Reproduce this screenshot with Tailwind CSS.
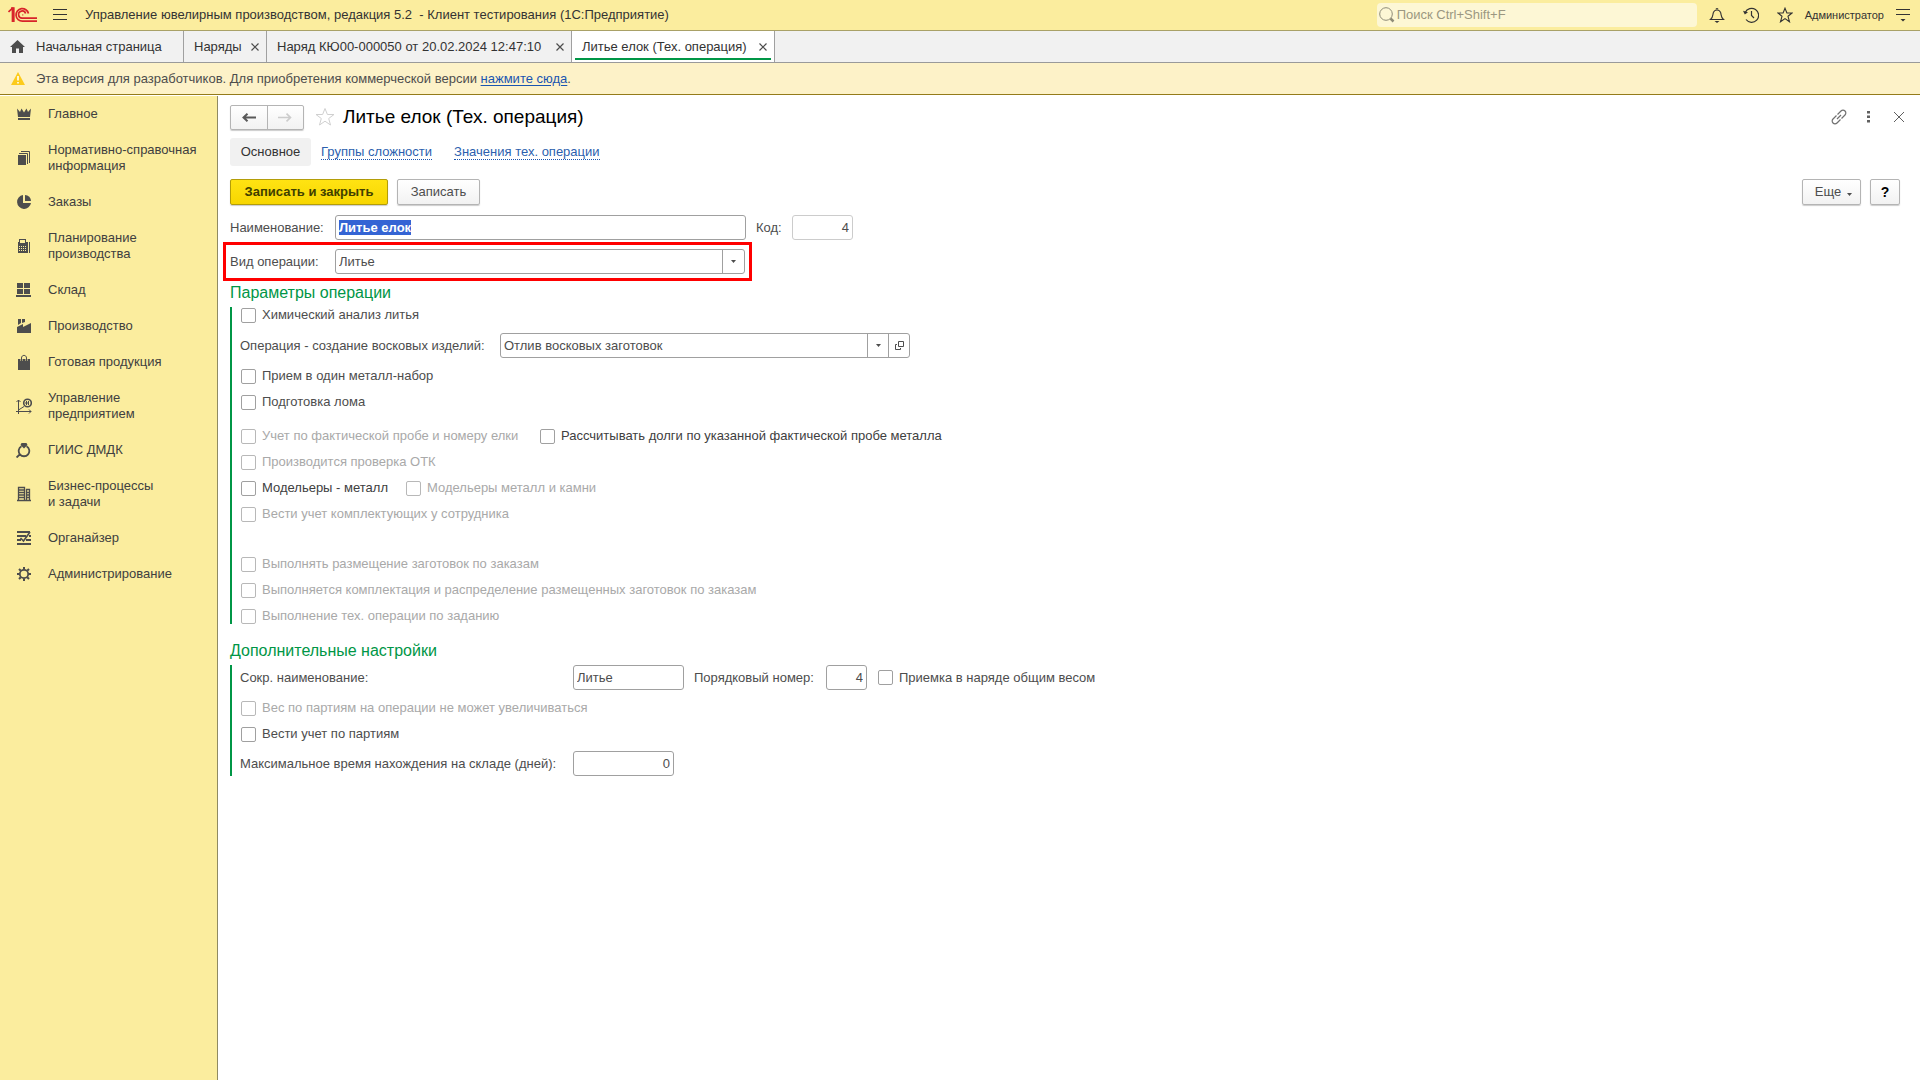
<!DOCTYPE html>
<html lang="ru">
<head>
<meta charset="utf-8">
<meta name="viewport" content="width=device-width, initial-scale=1">
<title>Литье елок (Тех. операция)</title>
<script src="https://cdn.jsdelivr.net/npm/@tailwindcss/browser@4"></script>
</head>
<body class="flex min-h-screen flex-col bg-white font-['Liberation_Sans',Arial,sans-serif] text-[13px] leading-4 text-[#4d4d4d]">

<!-- Title bar -->
<header class="flex h-[31px] shrink-0 items-center border-b border-[#a9a167] bg-[#fbed9e] pl-2 pr-[10px] text-[#333333]">
  <svg class="h-4 w-[30px] shrink-0" viewBox="0 0 30 16" fill="none" stroke="#d8232a" stroke-width="1.7" role="img" aria-label="1С">
    <path d="M0.5 5L4.5 1.2V15M3 1.2H5.8V15"/>
    <path d="M20.5 6.5A6.3 6.3 0 1 0 14.5 14.2H29"/>
    <path d="M17.6 6.5A3.6 3.6 0 1 0 14.5 11.2H29"/>
    <path d="M14.5 7.8H15.2"/>
  </svg>
  <button type="button" class="ml-[15px] shrink-0" aria-label="Меню">
    <svg class="h-3 w-[14px]" viewBox="0 0 14 12" stroke="#333333"><path d="M0 .5H14M0 5.5H14M0 10.5H14"/></svg>
  </button>
  <div class="ml-[18px] whitespace-pre">Управление ювелирным производством, редакция 5.2  - Клиент тестирования (1С:Предприятие)</div>
  <label class="ml-auto flex h-6 w-80 items-center gap-[2px] rounded-sm bg-[#fdf7d5] pl-[2px]">
    <svg class="size-4 shrink-0" viewBox="0 0 16 16" fill="none" stroke="#8f8c78"><circle cx="7" cy="7" r="6.3"/><path d="M11.5 11.5L14.5 14.5" stroke-width="2.5"/></svg>
    <input type="search" placeholder="Поиск Ctrl+Shift+F" class="min-w-0 flex-1 bg-transparent outline-none placeholder:text-[#9b9781]">
  </label>
  <button type="button" class="ml-3 shrink-0" aria-label="Уведомления">
    <svg class="size-4" viewBox="0 0 16 16" fill="none" stroke="#333333" stroke-width="1.1"><path d="M1.5 12.5C4.5 10 3.5 7.5 4.5 5.2C5 3.8 6.5 3 8 3S11 3.8 11.5 5.2C12.5 7.5 11.5 10 14.5 12.5Z"/><path d="M7 2.5a1 1 0 0 1 2 0"/><path d="M5.5 14H10.5L8 16Z" fill="#333333" stroke="none"/></svg>
  </button>
  <button type="button" class="ml-[18px] shrink-0" aria-label="История">
    <svg class="size-4" viewBox="0 0 16 16" fill="none" stroke="#333333" stroke-width="1.2"><path d="M2.2 5.5A7 7 0 1 1 3 12.5"/><path d="M0 3.8L5 5.2L1.8 7.5Z" fill="#333333" stroke="none"/><path d="M8.5 4V8.5L11 11"/></svg>
  </button>
  <button type="button" class="ml-[18px] shrink-0" aria-label="Избранное">
    <svg class="size-4" viewBox="0 0 16 16" fill="none" stroke="#333333" stroke-width="1.1"><path d="M8 1.2L9.9 6H15L11 9.3L12.5 14.8L8 11.6L3.5 14.8L5 9.3L1 6H6.1Z"/></svg>
  </button>
  <div class="ml-3 text-[11px]">Администратор</div>
  <button type="button" class="ml-3 shrink-0" aria-label="Сервис и настройки">
    <svg class="h-[14px] w-[14px]" viewBox="0 0 14 14" stroke="#333333"><path d="M0 1.5H14M0 6.5H14"/><path d="M4.5 11H9.5L7 13.5Z" fill="#333333" stroke="none"/></svg>
  </button>
</header>

<!-- Open windows -->
<nav class="flex h-8 shrink-0 whitespace-nowrap border-b border-[#9a9a9a] bg-[#f1f1f1] text-[#333333]">
  <a href="#" class="flex w-[184px] items-center gap-[11px] border-r border-[#a0a0a0] pl-[10px]">
    <svg class="h-[13px] w-[15px]" viewBox="0 0 15 13" fill="#4d4d4d"><path d="M7.5 0L15 7H13V13H9V8.5H6V13H2V7H0Z"/></svg>
    Начальная страница
  </a>
  <div class="flex w-[83px] items-center justify-between border-r border-[#a0a0a0] pl-[10px] pr-[7px]">
    <a href="#">Наряды</a>
    <button type="button" aria-label="Закрыть вкладку"><svg class="size-2" viewBox="0 0 8 8" stroke="#4d4d4d" stroke-width="1.2"><path d="M.5 .5L7.5 7.5M7.5 .5L.5 7.5"/></svg></button>
  </div>
  <div class="flex w-[305px] items-center justify-between border-r border-[#a0a0a0] pl-[10px] pr-[7px]">
    <a href="#">Наряд КЮ00-000050 от 20.02.2024 12:47:10</a>
    <button type="button" aria-label="Закрыть вкладку"><svg class="size-2" viewBox="0 0 8 8" stroke="#4d4d4d" stroke-width="1.2"><path d="M.5 .5L7.5 7.5M7.5 .5L.5 7.5"/></svg></button>
  </div>
  <div class="flex w-[203px] border-r border-[#a0a0a0] bg-white px-[3px] pb-[2px]">
    <div class="flex flex-1 items-center justify-between border-b-2 border-[#009646] pl-[7px] pr-1 pt-1">
      <a href="#" aria-current="page">Литье елок (Тех. операция)</a>
      <button type="button" aria-label="Закрыть вкладку"><svg class="size-2" viewBox="0 0 8 8" stroke="#4d4d4d" stroke-width="1.2"><path d="M.5 .5L7.5 7.5M7.5 .5L.5 7.5"/></svg></button>
    </div>
  </div>
</nav>

<!-- Licence notice -->
<div class="flex h-8 shrink-0 items-center gap-[11px] border-b border-[#947b1a] bg-[#fdf2c8] pl-[11px]">
  <svg class="h-[13px] w-[14px]" viewBox="0 0 14 13"><path d="M7 0L14 13H0Z" fill="#fccb1c"/><path d="M7 4V8.5M7 10V11.5" stroke="#fff" stroke-width="1.6"/></svg>
  <p>Эта версия для разработчиков. Для приобретения коммерческой версии <a href="#" class="text-[#1a55b0] underline underline-offset-2">нажмите сюда</a>.</p>
</div>

<div class="flex flex-1 pt-px">
  <!-- Sections -->
  <nav class="flex w-[218px] shrink-0 flex-col border-r border-[#8f8a62] bg-[#fbed9e] text-[#404040]">
    <a href="#" class="flex items-center gap-4 py-[10px] pl-4">
      <svg class="size-4 shrink-0" viewBox="0 0 16 16" fill="#4d4d4d"><path d="M1 2.500L4 6L5.500 2.500L8 6.500L10.500 2.500L12 6L15 2.500L14 11H2Z"/><path d="M2 12H14V14H2Z"/></svg>Главное</a>
    <a href="#" class="flex items-center gap-4 py-[10px] pl-4">
      <svg class="size-4 shrink-0" viewBox="0 0 16 16" fill="#4d4d4d"><path d="M2 5H10V15H2Z"/><path d="M3 3.500H11.500V14M5 1.500H13.500V13" fill="none" stroke="#4d4d4d"/></svg>Нормативно-справочная<br>информация</a>
    <a href="#" class="flex items-center gap-4 py-[10px] pl-4">
      <svg class="size-4 shrink-0" viewBox="0 0 16 16" fill="#4d4d4d"><path d="M7 1V9H15A7 7 0 1 1 7 1Z"/><path d="M9 1A6 6 0 0 1 15 7H9Z"/></svg>Заказы</a>
    <a href="#" class="flex items-center gap-4 py-[10px] pl-4">
      <svg class="size-4 shrink-0" viewBox="0 0 16 16" fill="#4d4d4d"><path fill-rule="evenodd" d="M3 1H10V4H12V15H2V4H3ZM4 2V5H9V2ZM3 8V9H4V8ZM5 8V9H6V8ZM7 8V9H8V8ZM9 8V9H10V8ZM3 10V11H4V10ZM5 10V11H6V10ZM7 10V11H8V10ZM9 10V11H10V10ZM3 12V13H4V12ZM5 12V13H6V12ZM7 12V13H8V12ZM9 12V13H10V12Z"/><path d="M13 4H14V15H13Z"/></svg>Планирование<br>производства</a>
    <a href="#" class="flex items-center gap-4 py-[10px] pl-4">
      <svg class="size-4 shrink-0" viewBox="0 0 16 16" fill="#4d4d4d"><path d="M1 1H7V6H1ZM8 1H14V6H8ZM1 7H7V12H1ZM8 7H14V12H8ZM0 13H15V15H0Z"/></svg>Склад</a>
    <a href="#" class="flex items-center gap-4 py-[10px] pl-4">
      <svg class="size-4 shrink-0" viewBox="0 0 16 16" fill="#4d4d4d"><path d="M1 15V9L7 6V9L15 5V15Z"/><path d="M2 1H5V5L2 7ZM6 1H9V4L6 5Z"/></svg>Производство</a>
    <a href="#" class="flex items-center gap-4 py-[10px] pl-4">
      <svg class="size-4 shrink-0" viewBox="0 0 16 16" fill="#4d4d4d"><path d="M2 5H14V16H2Z"/><path d="M5.500 7V4C5.500 .5 10.500 .5 10.500 4V7" fill="none" stroke="#fbed9e" stroke-width="2"/><path d="M5.500 7V4C5.500 .5 10.500 .5 10.500 4V7" fill="none" stroke="#4d4d4d"/></svg>Готовая продукция</a>
    <a href="#" class="flex items-center gap-4 py-[10px] pl-4">
      <svg class="size-4 shrink-0" viewBox="0 0 16 16" fill="none" stroke="#4d4d4d"><path d="M2.500 16V2M0 13.500H15M2.500 12L8 8.500M.5 4L2.500 2L4.500 4M13 11.500L15 13.500L13 15.500"/><circle cx="11.500" cy="5" r="3.800" stroke-width="1.600"/><path d="M10.500 3V7M12.500 3V7M9 5H13"/></svg>Управление<br>предприятием</a>
    <a href="#" class="flex items-center gap-4 py-[10px] pl-4">
      <svg class="size-4 shrink-0" viewBox="0 0 16 16" fill="none" stroke="#4d4d4d" stroke-width="1.800"><path d="M5.500 4.300A5.300 5.300 0 1 0 10.500 4.300M4.200 12L.6 15.500"/><path d="M5.500 1H10.500L11.500 3L8 6.500L4.500 3Z" fill="#4d4d4d" stroke="none"/></svg>ГИИС ДМДК</a>
    <a href="#" class="flex items-center gap-4 py-[10px] pl-4">
      <svg class="size-4 shrink-0" viewBox="0 0 16 16" fill="none" stroke="#4d4d4d"><path d="M2.500 15V1.500H8.500V15M10.500 15V3.500H13.500V15M1 14.500H15M3 4H8M3 6.500H8M3 9H8M3 11.500H8M10 6.500H13M10 9H13M10 11.500H13" stroke-width="1.300"/></svg>Бизнес-процессы<br>и задачи</a>
    <a href="#" class="flex items-center gap-4 py-[10px] pl-4">
      <svg class="size-4 shrink-0" viewBox="0 0 16 16" fill="none" stroke="#4d4d4d" stroke-width="1.800"><path d="M1 2H14M1 6H10M13 6H15M1 10H5M10 10H15M1 14H15"/><path d="M14 2L7.500 11L4.500 8" stroke-width="1.600"/></svg>Органайзер</a>
    <a href="#" class="flex items-center gap-4 py-[10px] pl-4">
      <svg class="size-4 shrink-0" viewBox="0 0 16 16" fill="none" stroke="#4d4d4d"><circle cx="8" cy="8" r="4.200" stroke-width="1.800"/><path d="M8 1V3.500M8 12.500V15M1 8H3.500M12.500 8H15M3 3L4.800 4.800M11.200 11.200L13 13M13 3L11.200 4.800M4.800 11.200L3 13" stroke-width="2"/></svg>Администрирование</a>
  </nav>

  <!-- Operation form -->
  <main class="min-w-0 flex-1 pl-3 pr-5 pt-[9px]">
    <div class="flex h-6 items-center">
      <div class="flex h-[25px] w-[74px] divide-x divide-[#b4b4b4] rounded-xs border border-[#b4b4b4] bg-linear-to-b from-white to-[#f2f2f2] shadow-[0_1px_1px_#cccccc]">
        <button type="button" class="flex flex-1 items-center justify-center" aria-label="Назад"><svg class="h-[9px] w-[14px]" viewBox="0 0 14 9" fill="none" stroke="#595959" stroke-width="2"><path d="M14 4.500H2M5.500 .7L1.500 4.500L5.500 8.300"/></svg></button>
        <button type="button" class="flex flex-1 items-center justify-center" aria-label="Вперед"><svg class="h-[9px] w-[14px]" viewBox="0 0 14 9" fill="none" stroke="#cccccc" stroke-width="1.600"><path d="M0 4.500H12M8.500 .7L12.500 4.500L8.500 8.300"/></svg></button>
      </div>
      <button type="button" class="ml-[11px]" aria-label="Добавить в избранное"><svg class="size-5" viewBox="0 0 20 20" fill="none" stroke="#d0d0d0"><path d="M10 1.500L12.400 7.500H19L13.700 11.500L15.500 18L10 14.200L4.500 18L6.300 11.500L1 7.500H7.600Z"/></svg></button>
      <h1 class="ml-2 text-[19px] leading-6 text-black">Литье елок (Тех. операция)</h1>
      <div class="ml-auto -mr-1 flex items-center">
        <button type="button" aria-label="Получить ссылку"><svg class="size-4" viewBox="0 0 16 16" fill="none" stroke="#707070" stroke-width="1.200"><path d="M6.500 5.500L10 2A2.800 2.800 0 0 1 14 6L10.500 9.500M9.500 10.500L6 14A2.800 2.800 0 0 1 2 10L5.500 6.500M6 10L10 6"/></svg></button>
        <button type="button" class="ml-5" aria-label="Еще действия"><svg class="h-3 w-[3px]" viewBox="0 0 3 12" fill="#606060"><path d="M0 0H3V2.500H0ZM0 4.500H3V7H0ZM0 9H3V11.500H0Z"/></svg></button>
        <button type="button" class="ml-6" aria-label="Закрыть"><svg class="size-[10px]" viewBox="0 0 10 10" stroke="#606060"><path d="M0 0L10 10M10 0L0 10"/></svg></button>
      </div>
    </div>

    <nav class="mt-[9px] flex h-7 items-center gap-[22px]">
      <a href="#" aria-current="page" class="-mr-3 w-[81px] rounded-[3px] bg-[#f1f1f1] py-[6px] text-center text-[#333333]">Основное</a>
      <a href="#" class="border-b border-dotted border-[#1a55b0] leading-[15px] text-[#2c5fae]">Группы сложности</a>
      <a href="#" class="border-b border-dotted border-[#1a55b0] leading-[15px] text-[#2c5fae]">Значения тех. операции</a>
    </nav>

    <form>
      <div class="mt-[13px] flex h-[26px] gap-[9px]">
        <button type="button" class="w-[158px] rounded-xs border border-[#b39d09] bg-linear-to-b from-[#ffe312] to-[#f7d600] font-bold text-[#404000] shadow-[0_1px_1px_#cccccc]">Записать и закрыть</button>
        <button type="button" class="w-[83px] rounded-xs border border-[#b4b4b4] bg-linear-to-b from-white to-[#f2f2f2] shadow-[0_1px_1px_#cccccc]">Записать</button>
        <button type="button" class="ml-auto flex w-[59px] items-center justify-center gap-[6px] rounded-xs border border-[#b4b4b4] bg-linear-to-b from-white to-[#f2f2f2] pl-1 shadow-[0_1px_1px_#cccccc]">Еще <svg class="mt-1 h-[3px] w-[5px]" viewBox="0 0 5 3" fill="#4d4d4d"><path d="M0 0H5L2.500 3Z"/></svg></button>
        <button type="button" class="w-[30px] rounded-xs border border-[#b4b4b4] bg-linear-to-b from-white to-[#f2f2f2] text-[14px] font-bold text-black shadow-[0_1px_1px_#cccccc]">?</button>
      </div>

      <div class="mt-[10px] flex h-[25px] items-center">
        <label for="name" class="w-[105px]">Наименование:</label>
        <input id="name" type="text" value="Литье елок" autofocus class="h-[25px] w-[411px] rounded-[3px] border border-[#a0a0a0] px-[3px] font-bold outline-none selection:bg-[#3464d4] selection:text-white">
        <label for="code" class="ml-[10px] w-9">Код:</label>
        <input id="code" type="text" value="4" readonly class="h-[25px] w-[61px] rounded-[3px] border border-[#cccccc] px-[3px] text-right outline-none">
      </div>

      <div class="relative mt-[9px] flex h-[25px] items-center">
        <label for="kind" class="w-[105px]">Вид операции:</label>
        <div class="flex h-[25px] w-[410px] items-center rounded-[3px] border border-[#a0a0a0]">
          <select id="kind" class="h-full min-w-0 flex-1 appearance-none pl-[3px] outline-none"><option>Литье</option></select>
          <span class="flex h-full w-[22px] items-center justify-center border-l border-[#a0a0a0]"><svg class="h-[3px] w-[5px]" viewBox="0 0 5 3" fill="#4d4d4d"><path d="M0 0H5L2.500 3Z"/></svg></span>
        </div>
        <div class="pointer-events-none absolute -left-[7px] -top-[7px] h-[39px] w-[529px] border-3 border-[#ff0000]"></div>
      </div>

      <section>
        <h2 class="mt-2 h-[25px] text-[16px] leading-[22px] text-[#009646]">Параметры операции</h2>
        <div class="border-l-2 border-[#009646] pl-2">
          <label class="flex w-fit items-center gap-[6px] pl-px"><input type="checkbox" class="size-[15px] appearance-none rounded-xs border border-[#a0a0a0]">Химический анализ литья</label>
          <div class="mt-[10px] flex h-[25px] items-center">
            <label for="wax" class="w-[260px]">Операция - создание восковых изделий:</label>
            <div class="flex h-[25px] w-[410px] items-center rounded-[3px] border border-[#a0a0a0]">
              <select id="wax" class="h-full min-w-0 flex-1 appearance-none pl-[3px] outline-none"><option>Отлив восковых заготовок</option></select>
              <span class="flex h-full w-[21px] items-center justify-center border-l border-[#a0a0a0]"><svg class="h-[3px] w-[5px]" viewBox="0 0 5 3" fill="#4d4d4d"><path d="M0 0H5L2.500 3Z"/></svg></span>
              <button type="button" class="flex h-full w-[21px] items-center justify-center border-l border-[#a0a0a0]" aria-label="Открыть"><svg class="size-[9px]" viewBox="0 0 9 9" fill="none" stroke="#4d4d4d"><path d="M3.500 .5H8.500V5.500H3.500ZM2 3.500H.5V8.500H5.500V7"/></svg></button>
            </div>
          </div>
          <div class="mt-[10px] flex flex-col gap-[10px] pl-px">
            <label class="flex w-fit items-center gap-[6px]"><input type="checkbox" class="size-[15px] appearance-none rounded-xs border border-[#a0a0a0]">Прием в один металл-набор</label>
            <label class="flex w-fit items-center gap-[6px]"><input type="checkbox" class="size-[15px] appearance-none rounded-xs border border-[#a0a0a0]">Подготовка лома</label>
          </div>
          <div class="mt-[18px] flex flex-col gap-[10px] pl-px text-[#a9a9a9]">
            <div class="flex gap-4">
              <label class="flex w-[283px] items-center gap-[6px]"><input type="checkbox" disabled class="size-[15px] appearance-none rounded-xs border border-[#b8b8b8]">Учет по фактической пробе и номеру елки</label>
              <label class="flex items-center gap-[6px] text-[#404040]"><input type="checkbox" class="size-[15px] appearance-none rounded-xs border border-[#a0a0a0]">Рассчитывать долги по указанной фактической пробе металла</label>
            </div>
            <label class="flex w-fit items-center gap-[6px]"><input type="checkbox" disabled class="size-[15px] appearance-none rounded-xs border border-[#b8b8b8]">Производится проверка ОТК</label>
            <div class="flex gap-4">
              <label class="flex w-[149px] items-center gap-[6px] text-[#404040]"><input type="checkbox" class="size-[15px] appearance-none rounded-xs border border-[#a0a0a0]">Модельеры - металл</label>
              <label class="flex items-center gap-[6px]"><input type="checkbox" disabled class="size-[15px] appearance-none rounded-xs border border-[#b8b8b8]">Модельеры металл и камни</label>
            </div>
            <label class="flex w-fit items-center gap-[6px]"><input type="checkbox" disabled class="size-[15px] appearance-none rounded-xs border border-[#b8b8b8]">Вести учет комплектующих у сотрудника</label>
          </div>
          <div class="mt-[34px] flex flex-col gap-[10px] pl-px text-[#a9a9a9]">
            <label class="flex w-fit items-center gap-[6px]"><input type="checkbox" disabled class="size-[15px] appearance-none rounded-xs border border-[#b8b8b8]">Выполнять размещение заготовок по заказам</label>
            <label class="flex w-fit items-center gap-[6px]"><input type="checkbox" disabled class="size-[15px] appearance-none rounded-xs border border-[#b8b8b8]">Выполняется комплектация и распределение размещенных заготовок по заказам</label>
            <label class="flex w-fit items-center gap-[6px]"><input type="checkbox" disabled class="size-[15px] appearance-none rounded-xs border border-[#b8b8b8]">Выполнение тех. операции по заданию</label>
          </div>
        </div>
      </section>

      <section>
        <h2 class="mt-4 h-[25px] text-[16px] leading-[22px] text-[#009646]">Дополнительные настройки</h2>
        <div class="border-l-2 border-[#009646] pl-2">
          <div class="flex h-[25px] items-center">
            <label for="short" class="w-[333px]">Сокр. наименование:</label>
            <input id="short" type="text" value="Литье" class="h-[25px] w-[111px] rounded-[3px] border border-[#a0a0a0] px-[3px] outline-none">
            <label for="order" class="ml-[10px] w-[132px]">Порядковый номер:</label>
            <input id="order" type="text" value="4" class="h-[25px] w-[41px] rounded-[3px] border border-[#a0a0a0] px-[3px] text-right outline-none">
            <label class="ml-[11px] flex items-center gap-[6px]"><input type="checkbox" class="size-[15px] appearance-none rounded-xs border border-[#a0a0a0]">Приемка в наряде общим весом</label>
          </div>
          <div class="mt-[10px] flex flex-col gap-[10px] pl-px">
            <label class="flex w-fit items-center gap-[6px] text-[#a9a9a9]"><input type="checkbox" disabled class="size-[15px] appearance-none rounded-xs border border-[#b8b8b8]">Вес по партиям на операции не может увеличиваться</label>
            <label class="flex w-fit items-center gap-[6px]"><input type="checkbox" class="size-[15px] appearance-none rounded-xs border border-[#a0a0a0]">Вести учет по партиям</label>
          </div>
          <div class="mt-[9px] flex h-[25px] items-center">
            <label for="days" class="w-[333px]">Максимальное время нахождения на складе (дней):</label>
            <input id="days" type="text" value="0" class="h-[25px] w-[101px] rounded-[3px] border border-[#a0a0a0] px-[3px] text-right outline-none">
          </div>
        </div>
      </section>
    </form>
  </main>
</div>
<script>
  // The name field opens with its value selected.
  const nameField = document.getElementById('name');
  nameField.focus();
  nameField.select();
</script>
</body>
</html>
